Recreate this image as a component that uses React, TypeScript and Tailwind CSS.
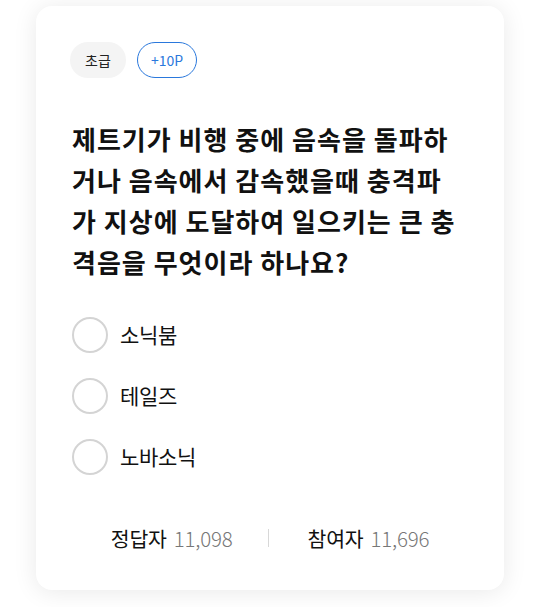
import React from "react";

const font = { fontFamily: '"Noto Sans CJK KR", "Noto Sans", sans-serif' };

export default function App() {
  const options = ["소닉붐", "테일즈", "노바소닉"];
  return (
    <div className="w-[540px] h-[607px] bg-white overflow-hidden" style={font}>
      <div className="pt-[6px] pl-[36px]">
        <div className="w-[468px] h-[584px] bg-white rounded-[16px] shadow-[0_2px_24px_rgba(0,0,0,0.09)] pt-[36px] px-[36px] flex flex-col">
          <div className="flex gap-[11px] -ml-[2px]">
            <span className="h-[36px] w-[56px] rounded-full bg-[#f4f4f4] text-[#222] text-[14px] flex items-center justify-center">초급</span>
            <span className="h-[36px] w-[60px] rounded-full border-[1.5px] border-[#2a78dc] text-[#2a78dc] text-[14px] flex items-center justify-center">+10P</span>
          </div>
          <p className="mt-[40px] pr-[8px] text-[26px] leading-[41px] font-bold text-[#111] tracking-[1px] break-all">
            제트기가 비행 중에 음속을 돌파하거나 음속에서 감속했을때 충격파가 지상에 도달하여 일으키는 큰 충격음을 무엇이라 하나요?
          </p>
          <div className="mt-[35px] flex flex-col gap-[25px]">
            {options.map((o) => (
              <div key={o} className="flex items-center gap-[12px]">
                <span className="w-[36px] h-[36px] rounded-full border-2 border-[#d4d4d4]" />
                <span className="text-[21px] text-[#111] tracking-[-0.3px]">{o}</span>
              </div>
            ))}
          </div>
          <div className="mt-[49px] flex items-center justify-center text-[20.5px] h-[28px] tracking-[-0.2px]">
            <span className="text-[#111]">정답자<span className="ml-[7px] text-[#777] font-light">11,098</span></span>
            <span className="ml-[35px] mr-[39px] w-px h-[18px] bg-[#d8d8d8]" />
            <span className="text-[#111]">참여자<span className="ml-[7px] text-[#777] font-light">11,696</span></span>
          </div>
        </div>
      </div>
    </div>
  );
}
